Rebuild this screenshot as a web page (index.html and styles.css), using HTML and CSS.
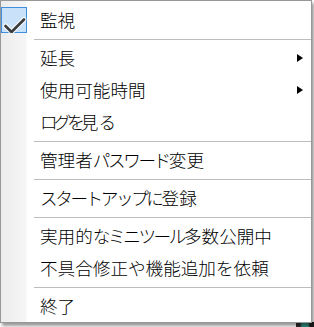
FILE: index.html
```html
<!DOCTYPE html>
<html lang="ja">
<head>
<meta charset="utf-8">
<link rel="stylesheet" href="styles.css">
</head>
<body>
<div class="desk"></div>
<div class="menu">
  <div class="item">
    <span class="icon checked">
      <svg width="26" height="26" viewBox="0 0 26 26">
        <polyline points="4.5,19 10.5,25 23,12.5" fill="none" stroke="#ffffff" stroke-width="5" stroke-linecap="round" stroke-linejoin="round" opacity="0.8"/>
        <polyline points="4.5,19 10.5,25 23,12.5" fill="none" stroke="#3b3b3b" stroke-width="2.6" stroke-linecap="round" stroke-linejoin="round"/>
      </svg>
    </span>
    <span class="label">監視</span>
  </div>
  <div class="sep"></div>
  <div class="item"><span class="icon"></span><span class="label">延長</span><span class="arrow"></span></div>
  <div class="item"><span class="icon"></span><span class="label">使用可能時間</span><span class="arrow"></span></div>
  <div class="item"><span class="icon"></span><span class="label"><span class="kana tight">ログを</span>見る</span></div>
  <div class="sep"></div>
  <div class="item"><span class="icon"></span><span class="label">管理者<span class="kana">パスワード</span>変更</span></div>
  <div class="sep"></div>
  <div class="item"><span class="icon"></span><span class="label"><span class="kana">スタートアップに</span>登録</span></div>
  <div class="sep"></div>
  <div class="item"><span class="icon"></span><span class="label">実用的<span class="kana">なミニツール</span>多数公開中</span></div>
  <div class="item"><span class="icon"></span><span class="label">不具合修正や機能追加を依頼</span></div>
  <div class="sep"></div>
  <div class="item"><span class="icon"></span><span class="label">終了</span></div>
</div>
</body>
</html>
```
FILE: styles.css
```css
html, body {
  margin: 0;
  padding: 0;
  background: #ffffff;
}
body {
  width: 314px;
  height: 327px;
  overflow: hidden;
  position: relative;
  font-family: "Noto Sans CJK JP", "Noto Sans", sans-serif;
}
.desk {
  position: absolute;
  right: 0;
  bottom: 0;
  width: 18px;
  height: 5px;
  background: linear-gradient(to right, #2b2b2b 0, #2b2b2b 4px, #2f8f7f 6px, #2f8f7f 12px, #1e1e1e 14px);
}
.menu {
  position: relative;
  width: 312px;
  box-sizing: border-box;
  border: 1px solid #979797;
  padding-top: 3px;
  background: linear-gradient(to right, #ececec 0, #f6f6f6 25px, #ffffff 26px);
  box-shadow: 2px 3px 3px rgba(0, 0, 0, 0.4);
}
.item {
  display: flex;
  align-items: center;
  height: 32px;
  color: #000000;
}
.icon {
  width: 26px;
  height: 26px;
  flex: none;
  margin-right: 13px;
  box-sizing: border-box;
}
.icon.checked {
  background: #c9e2f9;
  border: 1px solid #3d8fe0;
  position: relative;
}
.icon.checked svg {
  position: absolute;
  left: -1px;
  top: -1px;
}
.label {
  font-size: 17.6px;
  font-weight: 300;
  line-height: 20px;
  white-space: nowrap;
}
.kana {
  letter-spacing: -2.4px;
}
.kana.tight {
  letter-spacing: -4px;
}
.arrow {
  margin-left: auto;
  margin-right: 8px;
  width: 0;
  height: 0;
  border-top: 4.5px solid transparent;
  border-bottom: 4.5px solid transparent;
  border-left: 6px solid #000000;
}
.sep {
  margin: 3px 0 2px 33px;
  border-top: 1px solid #bcbcbc;
}
```
